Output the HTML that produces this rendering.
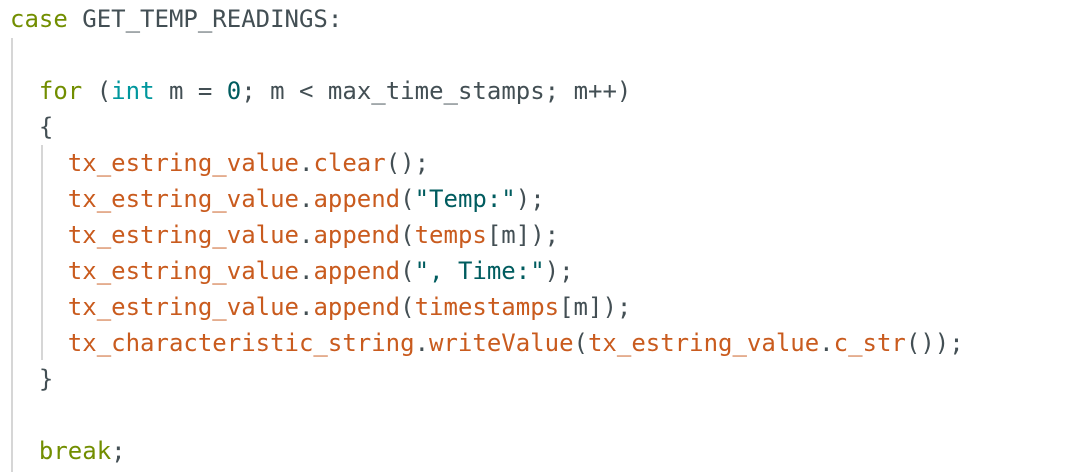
<!DOCTYPE html>
<html><head><style>
html,body{margin:0;padding:0;background:#fff;width:1090px;height:472px;overflow:hidden}
pre{margin:0;position:absolute;left:10px;top:1px;font-family:"DejaVu Sans Mono","Liberation Mono",monospace;font-size:24px;line-height:36px;color:#434f54}
.k{color:#728e00}.t{color:#00979d}.f{color:#c95b1e}.n{color:#005c5f}.s{color:#005c5f}
.g{position:absolute;background:#d6d6d6;width:2px}
</style></head><body>
<div class="g" style="left:11px;top:38px;height:434px"></div>
<div class="g" style="left:41px;top:145px;height:215px"></div>
<pre><span class="k">case</span> GET_TEMP_READINGS:

  <span class="k">for</span> (<span class="t">int</span> m = <span class="n">0</span>; m &lt; max_time_stamps; m++)
  {
    <span class="f">tx_estring_value</span>.<span class="f">clear</span>();
    <span class="f">tx_estring_value</span>.<span class="f">append</span>(<span class="s">"Temp:"</span>);
    <span class="f">tx_estring_value</span>.<span class="f">append</span>(<span class="f">temps</span>[m]);
    <span class="f">tx_estring_value</span>.<span class="f">append</span>(<span class="s">", Time:"</span>);
    <span class="f">tx_estring_value</span>.<span class="f">append</span>(<span class="f">timestamps</span>[m]);
    <span class="f">tx_characteristic_string</span>.<span class="f">writeValue</span>(<span class="f">tx_estring_value</span>.<span class="f">c_str</span>());
  }

  <span class="k">break</span>;</pre>
</body></html>
